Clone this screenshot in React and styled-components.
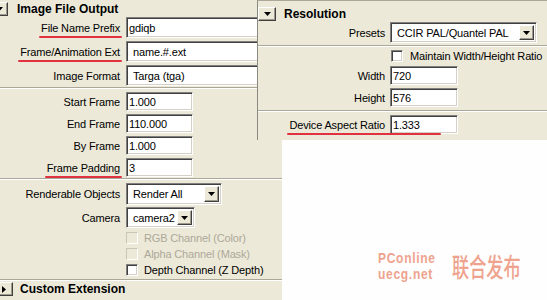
import React from 'react';
import styled, { createGlobalStyle, css } from 'styled-components';

const GlobalStyle = createGlobalStyle`
  html, body {
    margin: 0;
    padding: 0;
    background: #fefefe;
  }
  body {
    font-family: "Liberation Sans", Arial, sans-serif;
    font-size: 11px;
    letter-spacing: -0.15px;
    color: #000;
  }
`;

const PANEL = '#ece9d8';

const Screen = styled.div`
  position: relative;
  width: 547px;
  height: 300px;
  overflow: hidden;
  background: #fefefe;
`;

const LeftPanel = styled.div`
  width: 282px;
  height: 300px;
  background: ${PANEL};
  display: flex;
  flex-direction: column;
`;

/* the Resolution window sits over the right part of the left panel */
const RightPanel = styled.div`
  position: absolute;
  top: 0;
  left: 257px;
  width: 290px;
  height: 140px;
  box-sizing: border-box;
  background: ${PANEL};
  border-left: 1px solid #8c8a80;
  border-top: 1px solid #aca899;
  display: flex;
  flex-direction: column;
`;

const Header = styled.div`
  display: flex;
  align-items: center;
  gap: ${({ $gap }) => $gap}px;
  height: ${({ $h }) => $h}px;
  margin-top: ${({ $mt }) => $mt || 0}px;
  font-size: 12px;
  font-weight: bold;
  letter-spacing: 0;
  white-space: nowrap;
`;

const ToggleButton = styled.div`
  flex: none;
  width: ${({ $w }) => $w}px;
  height: 14px;
  margin-left: ${({ $offset }) => $offset || 0}px;
  box-sizing: border-box;
  background: ${PANEL};
  border: 1px solid;
  border-color: #fff #404040 #404040 #fff;
  box-shadow: inset -1px -1px 0 #9d9a8c;
  display: flex;
  align-items: center;
  justify-content: center;
`;

const Row = styled.div`
  display: grid;
  grid-template-columns: ${({ $labelW }) => $labelW}px auto;
  column-gap: ${({ $gap }) => $gap}px;
  align-items: center;
  height: ${({ $h }) => $h}px;
  margin-top: ${({ $mt }) => $mt || 0}px;
`;

const Label = styled.span`
  position: relative;
  justify-self: end;
  white-space: nowrap;

  ${({ $mark, $extend }) =>
    $mark &&
    css`
      &::after {
        content: '';
        position: absolute;
        left: -2px;
        right: ${-($extend || 2)}px;
        bottom: -4px;
        height: 2px;
        border-radius: 1px;
        background: #e0323f;
      }
    `}
`;

const Field = styled.div`
  box-sizing: border-box;
  width: ${({ $w }) => $w}px;
  height: 100%;
  background: #fff;
  border: 1px solid;
  border-color: #808080 #fff #fff #808080;
  box-shadow: inset 1px 1px 0 #404040, inset -1px -1px 0 #d4d0c8;
  padding-left: ${({ $pad }) => $pad || 2}px;
  display: flex;
  align-items: center;
  white-space: nowrap;
  overflow: hidden;
`;

const ComboText = styled.span`
  flex: 1;
  overflow: hidden;
`;

const ComboButton = styled.span`
  flex: none;
  width: 15px;
  height: calc(100% - 4px);
  margin-right: 2px;
  box-sizing: border-box;
  background: ${PANEL};
  border: 1px solid;
  border-color: #fff #404040 #404040 #fff;
  box-shadow: inset -1px -1px 0 #9d9a8c;
  display: flex;
  align-items: center;
  justify-content: center;
`;

const Separator = styled.div`
  flex: none;
  border-top: 1px solid #aca899;
  border-bottom: 1px solid #fff;
  margin-top: ${({ $mt }) => $mt}px;
  margin-bottom: ${({ $mb }) => $mb}px;
`;

const CheckRow = styled.div`
  display: flex;
  align-items: center;
  gap: ${({ $gap }) => $gap || 6}px;
  height: ${({ $h }) => $h}px;
  margin-top: ${({ $mt }) => $mt || 0}px;
  padding-left: ${({ $indent }) => $indent}px;
  white-space: nowrap;
  color: ${({ $disabled }) => ($disabled ? '#aca899' : '#000')};
`;

const CheckBox = styled.span`
  flex: none;
  width: 12px;
  height: 12px;
  box-sizing: border-box;
  border: 1px solid;
  border-color: ${({ $disabled }) =>
    $disabled ? '#c9c6b6 #fff #fff #c9c6b6' : '#808080 #fff #fff #808080'};
  box-shadow: ${({ $disabled }) =>
    $disabled ? 'none' : 'inset 1px 1px 0 #404040, inset -1px -1px 0 #d4d0c8'};
  background: ${({ $disabled }) => ($disabled ? PANEL : '#fff')};
`;

const Watermark = styled.div`
  position: absolute;
  left: 378px;
  top: 250px;
  display: flex;
  align-items: center;
  gap: 14px;
  color: #efa38e;
  letter-spacing: 0;
`;

const WatermarkLatin = styled.div`
  width: 60px;
  height: 32px;
`;

const LatinText = styled.div`
  display: flex;
  flex-direction: column;
  font-family: "Liberation Sans", Arial, sans-serif;
  font-size: 14px;
  font-weight: bold;
  line-height: 16px;
  letter-spacing: 0.8px;
  white-space: nowrap;
  transform: scaleX(0.86);
  transform-origin: left center;
`;

const WatermarkCjk = styled.div`
  width: 69px;
  height: 30px;
`;

const CjkText = styled.span`
  display: inline-block;
  font-family: "Noto Sans CJK SC", sans-serif;
  font-size: 26px;
  font-weight: 500;
  line-height: 30px;
  white-space: nowrap;
  transform: scaleX(0.66);
  transform-origin: left center;
`;

const Down = () => (
  <svg width="7" height="4" viewBox="0 0 7 4">
    <polygon points="0,0 7,0 3.5,4" fill="#000" />
  </svg>
);

const RightArrow = () => (
  <svg width="4" height="7" viewBox="0 0 4 7">
    <polygon points="0,0 4,3.5 0,7" fill="#000" />
  </svg>
);

const Combo = ({ w, children }) => (
  <Field $w={w} $pad={6}>
    <ComboText>{children}</ComboText>
    <ComboButton>
      <Down />
    </ComboButton>
  </Field>
);

const LeftRow = ({ label, mark, h, mt, children }) => (
  <Row $labelW={120} $gap={6} $h={h} $mt={mt}>
    <Label $mark={mark}>{label}</Label>
    {children}
  </Row>
);

const RightRow = ({ label, mark, extend, h, mt, children }) => (
  <Row $labelW={127} $gap={5} $h={h} $mt={mt}>
    <Label $mark={mark} $extend={extend}>
      {label}
    </Label>
    {children}
  </Row>
);

const App = () => {
  return (
    <Screen>
      <GlobalStyle />
      <LeftPanel>
        <Header $h={17} $gap={9}>
          <ToggleButton $w={17} $offset={-9}>
            <Down />
          </ToggleButton>
          Image File Output
        </Header>
        <LeftRow label="File Name Prefix" mark h={21}>
          <Field $w={150}>gdiqb</Field>
        </LeftRow>
        <LeftRow label="Frame/Animation Ext" mark h={21} mt={3}>
          <Combo w={150}>name.#.ext</Combo>
        </LeftRow>
        <LeftRow label="Image Format" h={21} mt={3}>
          <Combo w={150}>Targa (tga)</Combo>
        </LeftRow>
        <Separator $mt={1} $mb={3} />
        <LeftRow label="Start Frame" h={19}>
          <Field $w={67}>1.000</Field>
        </LeftRow>
        <LeftRow label="End Frame" h={19} mt={3}>
          <Field $w={67}>110.000</Field>
        </LeftRow>
        <LeftRow label="By Frame" h={19} mt={3}>
          <Field $w={67}>1.000</Field>
        </LeftRow>
        <LeftRow label="Frame Padding" mark h={19} mt={3}>
          <Field $w={67}>3</Field>
        </LeftRow>
        <Separator $mt={1} $mb={3} />
        <LeftRow label="Renderable Objects" h={22}>
          <Combo w={96}>Render All</Combo>
        </LeftRow>
        <LeftRow label="Camera" h={21} mt={2}>
          <Combo w={69}>camera2</Combo>
        </LeftRow>
        <CheckRow $indent={126} $h={16} $mt={2} $disabled>
          <CheckBox $disabled />
          RGB Channel (Color)
        </CheckRow>
        <CheckRow $indent={126} $h={16} $disabled>
          <CheckBox $disabled />
          Alpha Channel (Mask)
        </CheckRow>
        <CheckRow $indent={126} $h={16}>
          <CheckBox />
          Depth Channel (Z Depth)
        </CheckRow>
        <Separator $mt={1} $mb={0} />
        <Header $h={16} $gap={7}>
          <ToggleButton $w={18} $offset={-5}>
            <RightArrow />
          </ToggleButton>
          Custom Extension
        </Header>
      </LeftPanel>

      <RightPanel>
        <Header $h={16} $gap={8} $mt={5}>
          <ToggleButton $w={18}>
            <Down />
          </ToggleButton>
          Resolution
        </Header>
        <RightRow label="Presets" h={21}>
          <Combo w={147}>CCIR PAL/Quantel PAL</Combo>
        </RightRow>
        <Separator $mt={2} $mb={1} />
        <CheckRow $indent={133} $h={16} $gap={7}>
          <CheckBox />
          Maintain Width/Height Ratio
        </CheckRow>
        <RightRow label="Width" h={19} mt={2}>
          <Field $w={68}>720</Field>
        </RightRow>
        <RightRow label="Height" h={19} mt={3}>
          <Field $w={68}>576</Field>
        </RightRow>
        <Separator $mt={3} $mb={3} />
        <RightRow label="Device Aspect Ratio" mark extend={56} h={19}>
          <Field $w={68}>1.333</Field>
        </RightRow>
      </RightPanel>

      <Watermark>
        <WatermarkLatin>
          <LatinText>
            <span>PConline</span>
            <span>uecg.net</span>
          </LatinText>
        </WatermarkLatin>
        <WatermarkCjk>
          <CjkText>联合发布</CjkText>
        </WatermarkCjk>
      </Watermark>
    </Screen>
  );
};

export default App;
